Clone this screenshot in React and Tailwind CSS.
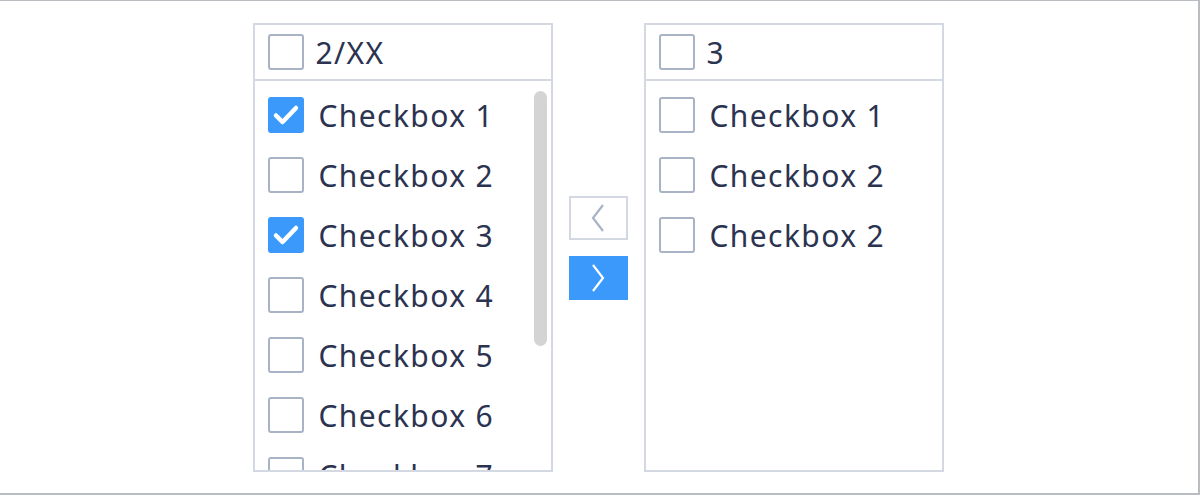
import React from "react";

const leftItems = [
  { label: "Checkbox 1", checked: true },
  { label: "Checkbox 2", checked: false },
  { label: "Checkbox 3", checked: true },
  { label: "Checkbox 4", checked: false },
  { label: "Checkbox 5", checked: false },
  { label: "Checkbox 6", checked: false },
  { label: "Checkbox 7", checked: false },
];

const rightItems = [
  { label: "Checkbox 1", checked: false },
  { label: "Checkbox 2", checked: false },
  { label: "Checkbox 2", checked: false },
];

const Box = ({ checked }) =>
  checked ? (
    <span className="flex h-[36px] w-[36px] shrink-0 items-center justify-center rounded-[3px] bg-[#3b99fc]">
      <svg width="28" height="28" viewBox="0 0 28 28" fill="none">
        <path
          d="M4 14.5l6.5 6.5L24 7"
          stroke="white"
          strokeWidth="4.5"
          strokeLinecap="round"
          strokeLinejoin="round"
        />
      </svg>
    </span>
  ) : (
    <span className="block h-[36px] w-[36px] shrink-0 rounded-[3px] border-[2.5px] border-[#a9b3c6] bg-white" />
  );

const Row = ({ label, checked }) => (
  <div className="flex h-[60px] items-center pl-[13px]">
    <Box checked={checked} />
    <span className="ml-[15px] text-[30px] tracking-[1.4px] text-[#2b3350]">{label}</span>
  </div>
);

const Panel = ({ title, items, scroll }) => (
  <div className="relative flex h-[449px] w-[300px] flex-col overflow-hidden border-2 border-[#d3d8e2] bg-white">
    <div className="flex h-[56px] shrink-0 items-center border-b-2 border-[#d3d8e2] pl-[13px]">
      <Box checked={false} />
      <span className="ml-[12px] text-[30px] tracking-[1.4px] text-[#2b3350]">{title}</span>
    </div>
    <div className="flex flex-col pt-[4px]">
      {items.map((it, i) => (
        <Row key={i} {...it} />
      ))}
    </div>
    {scroll && (
      <div className="absolute right-[4px] top-[66px] h-[255px] w-[13px] rounded-full bg-[#d4d4d4]" />
    )}
  </div>
);

export default function App() {
  return (
    <div
      className="flex h-[495px] w-[1200px] items-start justify-center gap-[16px] border-t border-r-2 border-b-2 border-[#b9bdc1] bg-white pt-[22px] pr-[2px]"
      style={{ fontFamily: '"Noto Sans", "Open Sans", sans-serif' }}
    >
      <Panel title="2/XX" items={leftItems} scroll />
      <div className="flex h-[449px] flex-col items-center justify-center gap-[16px]">
        <button className="flex h-[44px] w-[59px] items-center justify-center border-2 border-[#d3d8e2] bg-white">
          <svg width="14" height="30" viewBox="0 0 14 30" fill="none">
            <path d="M12 2L2 15l10 13" stroke="#a9b3c6" strokeWidth="2.2" />
          </svg>
        </button>
        <button className="flex h-[44px] w-[59px] items-center justify-center bg-[#3b99fc]">
          <svg width="14" height="30" viewBox="0 0 14 30" fill="none">
            <path d="M2 2l10 13L2 28" stroke="white" strokeWidth="2.2" />
          </svg>
        </button>
      </div>
      <Panel title="3" items={rightItems} />
    </div>
  );
}
